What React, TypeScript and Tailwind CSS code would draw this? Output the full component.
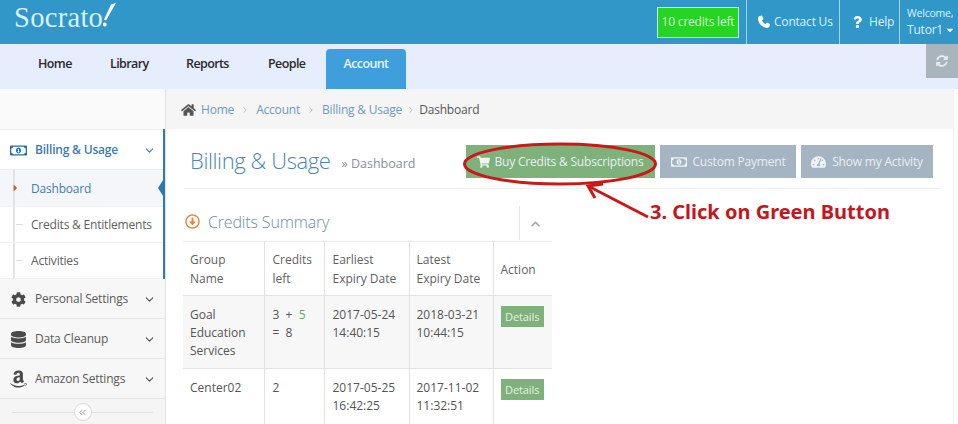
import React from "react";
import { FaHome, FaQuestion, FaCaretDown, FaSyncAlt, FaRegMoneyBillAlt, FaCog, FaDatabase, FaAmazon, FaShoppingCart, FaTachometerAlt, FaRegArrowAltCircleDown, FaChevronUp, FaCaretRight } from "react-icons/fa";
import { ChevronDown, ChevronRight, ChevronsLeft } from "lucide-react";

function Crumb({ children, tight }: { children: React.ReactNode; tight?: boolean }) {
  return (
    <>
      <span className="text-[#6f9bb8]">{children}</span>
      <ChevronRight className={`w-[10px] h-[10px] text-[#b5b5b5] ${tight ? "mx-[3.5px]" : "mx-[6px]"}`} />
    </>
  );
}

function SideGroup({ icon, label }: { icon: React.ReactNode; label: string }) {
  return (
    <div className="h-[40px] flex items-center bg-[#f7f7f7] border-b border-[#e6e6e6] text-[#5b5b5b] text-[12px] tracking-[-0.2px] pt-[1px]">
      <div className="w-[35px] flex justify-center text-[#4a4a4a] pl-[1px]">{icon}</div>
      <span className="flex-1">{label}</span>
      <ChevronDown className="w-[13px] h-[13px] mr-[9px] text-[#555]" strokeWidth={2.2} />
    </div>
  );
}

function SubItem({ label, active }: { label: string; active?: boolean }) {
  return (
    <div className={`flex items-center relative text-[12px] tracking-[-0.2px] pt-[1px] ${active ? "h-[37px] bg-[#f4f6f9] text-[#3f7fae]" : "h-[36px] bg-white text-[#5e5e5e]"} border-b border-[#f1f1f1]`}>
      <div className="absolute left-[13px] top-0 bottom-0 w-[2px] bg-[#e3e3e3]" />
      {active ? (
        <FaCaretRight className="absolute left-[11px] top-[13px] w-[9px] h-[10px] text-[#c9582a]" />
      ) : (
        <div className="absolute left-[16px] top-[17px] w-[7px] h-[1px] bg-[#dcdcdc]" />
      )}
      <span className="pl-[31px]">{label}</span>
      {active && (
        <div className="absolute right-0 top-[7px] w-0 h-0 border-y-[11px] border-y-transparent border-r-[7px] border-r-[#2a7ab5]" />
      )}
    </div>
  );
}

function ActionButton({ icon, label, className }: { icon: React.ReactNode; label: string; className: string }) {
  return (
    <div className={`h-[33px] flex items-center justify-center text-[12px] tracking-[-0.2px] pt-[1px] text-[#e9eef2] ${className}`}>
      {icon}
      <span>{label}</span>
    </div>
  );
}

function Details() {
  return (
    <span className="inline-block bg-[#7fb27b] text-[#e4f0e2] text-[11px] tracking-[-0.1px] leading-[21px] px-[4.5px]">Details</span>
  );
}

const th = "font-normal text-left align-middle px-[7px] pt-[2px] border-r border-[#e2e2e2] text-[#5f5f5f] leading-[19px]";
const td = "align-top px-[7px] pt-[10px] border-r border-[#e2e2e2]";

export default function App() {
  return (
    <div className="relative w-[958px] h-[424px] overflow-hidden bg-white font-['Open_Sans',sans-serif]">
      <header className="h-[44px] bg-[#3097c8] flex items-stretch justify-between text-[#dff1fa]">
        <div className="pl-[14px] flex items-start text-[#dbf0f9] font-['Liberation_Serif',serif]">
          <span className="text-[28.5px] leading-[36px] tracking-[0.3px]">Socrato</span>
          <svg width="14" height="24" viewBox="0 0 14 24" className="mt-[3px]">
            <path d="M13 0 L8 1.5 L1 16.5 L3 17.5 Z" fill="#fff" />
            <circle cx="1.8" cy="21.5" r="1.9" fill="#fff" />
          </svg>
        </div>
        <div className="flex items-stretch text-[12px] tracking-[-0.2px]">
          <div className="flex items-center mr-[7px]">
            <div className="w-[82px] h-[31px] bg-[#27d424] border border-[#c9efdc] flex items-center justify-center text-[#d7f7d4] text-[12px]">10 credits left</div>
          </div>
          <div className="w-[93px] border-l border-[#a4d2e6] flex items-center pl-[10px] whitespace-nowrap">
            <svg width="14" height="14" viewBox="0 0 14 14" className="mr-[3px] text-white" fill="currentColor">
              <path d="M2.5 1 L5 .5 L6.5 4 L5 5.3 C5.5 7 7 8.5 8.7 9 L10 7.5 L13 9 L12.5 11.5 C12 13 10 13.2 8 12.5 C4 11 1.5 8 1 4.5 C.8 3 1.2 1.6 2.5 1Z" />
            </svg>
            <span>Contact Us</span>
          </div>
          <div className="w-[60px] border-l border-[#a4d2e6] flex items-center pl-[13px]">
            <FaQuestion className="w-[9px] h-[12px] mr-[7px] text-white" />
            <span>Help</span>
          </div>
          <div className="w-[59px] border-l border-[#a4d2e6] pl-[7px] pt-[5px]">
            <div className="text-[10.5px] leading-[16px] whitespace-nowrap">Welcome,</div>
            <div className="flex items-center leading-[17px] text-[12px]">Tutor1<FaCaretDown className="w-[10px] h-[10px] ml-[2px] text-white" /></div>
          </div>
        </div>
      </header>

      <nav className="h-[45px] bg-[#e6edfc] flex items-stretch justify-between">
        <div className="flex items-end pl-[38px] text-[12.5px] tracking-[-0.6px] font-semibold text-[#2b2b2b]">
          <div className="h-[40px] w-[72px] pt-[6px]">Home</div>
          <div className="h-[40px] w-[76px] pt-[6px]">Library</div>
          <div className="h-[40px] w-[82px] pt-[6px]">Reports</div>
          <div className="h-[40px] w-[58px] pt-[6px]">People</div>
          <div className="h-[40px] w-[80px] pt-[6px] text-center bg-[#3f9fdc] text-[#eaf5fc] rounded-t-[4px]">Account</div>
        </div>
        <div className="w-[32px] h-[34px] bg-[#a9b4bd] flex items-center justify-center">
          <FaSyncAlt className="w-[12px] h-[12px] text-[#e8ecef]" />
        </div>
      </nav>

      <div className="flex">
        <aside className="w-[166px] shrink-0 border-r border-[#e2e2e2]">
          <div className="h-[41px] bg-[#fafafa] border-b border-[#eeeeee]" />
          <div className="relative">
            <div className="h-[40px] flex items-center bg-white border-b border-[#ececec] text-[#3a7cad] text-[12px] tracking-[-0.2px] font-semibold pt-[1px]">
              <div className="w-[35px] flex justify-center pl-[2px]">
                <FaRegMoneyBillAlt className="w-[17px] h-[15px] text-[#2d6d9e]" />
              </div>
              <span className="flex-1">Billing &amp; Usage</span>
              <ChevronDown className="w-[13px] h-[13px] mr-[9px] text-[#4d7fa3]" strokeWidth={2.2} />
            </div>
            <SubItem label="Dashboard" active />
            <SubItem label="Credits & Entitlements" />
            <SubItem label="Activities" />
            <div className="absolute right-0 -top-[1px] bottom-0 w-[2px] bg-[#2a7ab5]" />
          </div>
          <SideGroup icon={<FaCog className="w-[15px] h-[15px]" />} label="Personal Settings" />
          <SideGroup icon={<FaDatabase className="w-[15px] h-[17px]" />} label="Data Cleanup" />
          <SideGroup icon={<FaAmazon className="w-[17px] h-[20px]" />} label="Amazon Settings" />
          <div className="h-[30px] bg-[#f5f5f5] flex items-center justify-center relative">
            <div className="absolute left-[12px] right-[12px] top-[13px] h-[1px] bg-[#e2e2e2]" />
            <div className="relative w-[18px] h-[18px] rounded-full bg-white border border-[#dcdcdc] flex items-center justify-center -mt-[4px]">
              <ChevronsLeft className="w-[11px] h-[11px] text-[#8f8f8f]" />
            </div>
          </div>
        </aside>

        <main className="flex-1 min-w-0 mr-[4px] border-r border-[#f3f3f3]">
          <div className="h-[40px] bg-[#f5f5f5] flex items-center pl-[15px] pt-[2px] text-[12px] tracking-[-0.2px]">
            <FaHome className="w-[15px] h-[14px] text-[#555] mr-[5px]" />
            <Crumb>Home</Crumb>
            <Crumb>Account</Crumb>
            <Crumb tight>Billing &amp; Usage</Crumb>
            <span className="text-[#555]">Dashboard</span>
          </div>

          <div className="pl-[18px] pr-[13px]">
            <div className="h-[60px] border-b border-[#f0f0f0] flex items-start pt-[16px]">
              <div className="pl-[6px] flex items-baseline w-[282px] shrink-0 -mt-[1px]">
                <span className="text-[22px] tracking-[-0.4px] leading-[32px] font-light text-[#4a86b0]">Billing &amp; Usage</span>
                <span className="text-[12.5px] text-[#8a8f96] ml-[11px] -translate-y-[1px]">» Dashboard</span>
              </div>
              <div className="flex gap-[5px]">
                <ActionButton className="w-[189px] bg-[#7fb27b]" icon={<FaShoppingCart className="w-[13px] h-[12px] mr-[4px] text-[#f0f5ee]" />} label="Buy Credits & Subscriptions" />
                <ActionButton className="w-[136px] bg-[#a5b4c2]" icon={<FaRegMoneyBillAlt className="w-[16px] h-[14px] mr-[6px] text-[#f0f3f5]" />} label="Custom Payment" />
                <ActionButton className="w-[132px] bg-[#a5b4c2]" icon={<FaTachometerAlt className="w-[15px] h-[14px] mr-[6px] text-[#f0f3f5]" />} label="Show my Activity" />
              </div>
            </div>

            <div className="w-[369px] -ml-[1px]">
              <div className="h-[53px] flex items-center relative pt-[13px] border-b border-[#eaeaea]">
                <FaRegArrowAltCircleDown className="w-[15px] h-[15px] text-[#e8843a] ml-[2px] mr-[8px]" />
                <span className="text-[16px] tracking-[-0.15px] font-light text-[#6d8ea5]">Credits Summary</span>
                <div className="absolute left-[336px] top-[17px] h-[34px] border-l border-[#e6e6e6]" />
                <FaChevronUp className="absolute left-[346px] top-[30px] w-[13px] h-[10px] text-[#a9a9a9]" />
              </div>
              <table className="w-[369px] table-fixed border-collapse text-[12px] leading-[18px] text-[#555]">
                <colgroup>
                  <col className="w-[81px]" />
                  <col className="w-[60px]" />
                  <col className="w-[85px]" />
                  <col className="w-[84px]" />
                  <col className="w-[59px]" />
                </colgroup>
                <tbody>
                  <tr className="h-[53px] border-b border-[#e2e2e2]">
                    <td className={th}>Group<br />Name</td>
                    <td className={`${th} pl-[8px]`}>Credits<br />left</td>
                    <td className={`${th} pl-[8px]`}>Earliest<br />Expiry Date</td>
                    <td className={th}>Latest<br />Expiry Date</td>
                    <td className={`${th} border-r-0`}>Action</td>
                  </tr>
                  <tr className="h-[73px] bg-[#f7f7f7] border-b border-[#e2e2e2]">
                    <td className={td}>Goal<br />Education<br />Services</td>
                    <td className={`${td} pl-[8px]`}>3&nbsp;&nbsp;+&nbsp;&nbsp;<span className="text-[#6fa45f]">5</span><br />=&nbsp;&nbsp;8</td>
                    <td className={`${td} pl-[8px]`}>2017-05-24<br />14:40:15</td>
                    <td className={td}>2018-03-21<br />10:44:15</td>
                    <td className={`${td} border-r-0`}><Details /></td>
                  </tr>
                  <tr className="h-[60px]">
                    <td className={td}>Center02</td>
                    <td className={`${td} pl-[8px]`}>2</td>
                    <td className={`${td} pl-[8px]`}>2017-05-25<br />16:42:25</td>
                    <td className={td}>2017-11-02<br />11:32:51</td>
                    <td className={`${td} border-r-0`}><Details /></td>
                  </tr>
                </tbody>
              </table>
            </div>
          </div>
        </main>
      </div>

      <svg className="absolute left-0 top-0 pointer-events-none" width="958" height="424">
        <ellipse cx="560" cy="164" rx="95.5" ry="20" fill="none" stroke="#c81a1a" strokeWidth="3" />
        <path d="M648 217 L590 187" fill="none" stroke="#c81a1a" strokeWidth="3" />
        <path d="M603 184 L588 186 L595 198" fill="none" stroke="#c81a1a" strokeWidth="3" />
      </svg>
      <div className="absolute left-[650px] top-[198px] text-[20px] leading-[28px] font-bold text-[#c5161d] whitespace-nowrap font-['Noto_Sans',sans-serif]">3. Click on Green Button</div>
    </div>
  );
}
